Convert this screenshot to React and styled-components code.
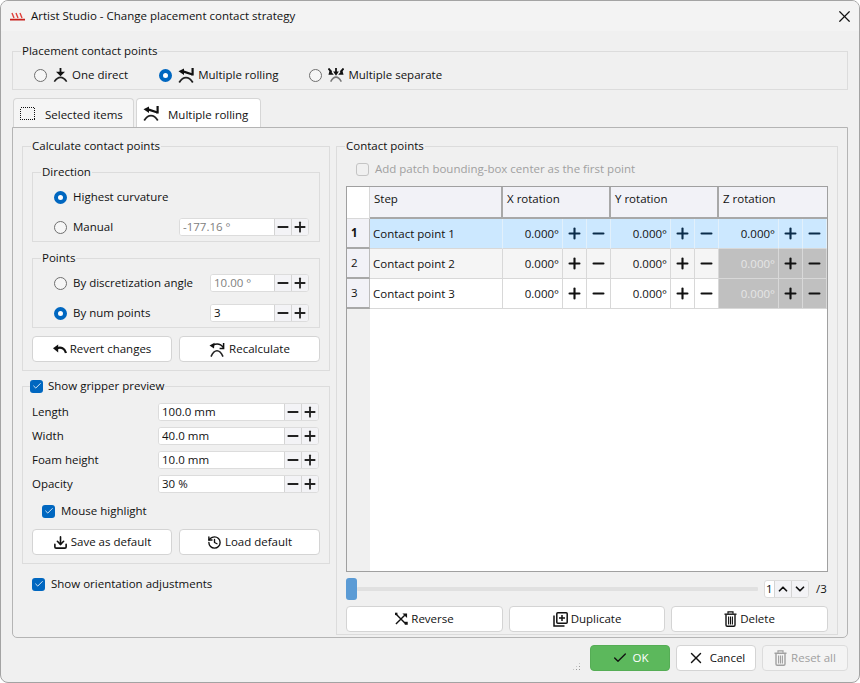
import styled, { createGlobalStyle } from 'styled-components';
import { Check, ChevronDown, ChevronUp, Download, History, Minus, Plus, X } from 'lucide-react';

const FONT = "'Open Sans', 'Noto Sans', sans-serif";

function Logo() {
  return (
    <svg width="15" height="9" viewBox="0 0 15 9">
      <path d="M2 1 L4 6 M6 1 L8 6 M10 1 L12 6" fill="none" stroke="#e0403a" strokeWidth="1.4" />
      <path d="M0 7.6 H15" stroke="#c8201c" strokeWidth="1.6" />
    </svg>
  );
}

function DirectIcon() {
  return (
    <svg width="15" height="14" viewBox="-0.5 0 15 14">
      <path d="M7 0 V5" stroke="#111" strokeWidth="1.8" />
      <path d="M2.5 3.8 H11.5 L7 8.3 Z" fill="#111" />
      <path d="M0.8 13.6 C3 10.4 5 9.4 7 9.4 C9 9.4 11 10.4 13.2 13.6" fill="none" stroke="#222" strokeWidth="1.6" />
    </svg>
  );
}

function RollingIcon() {
  return (
    <svg width="16" height="15" viewBox="0 0 16 15">
      <path d="M14.6 0 V7.5" stroke="#111" strokeWidth="2.2" />
      <path d="M14.5 6.5 L5 3.4" stroke="#111" strokeWidth="2.2" />
      <path d="M0.5 3.2 L6 0.6 V7 Z" fill="#111" />
      <path d="M1.2 14.4 C3.5 10.8 6 9.6 8 9.6 C10 9.6 12.5 10.8 14.8 14.4" fill="none" stroke="#222" strokeWidth="1.8" />
    </svg>
  );
}

function SeparateIcon() {
  return (
    <svg width="16" height="14" viewBox="0 0 18 14" preserveAspectRatio="none">
      <path d="M0.5 0.5 L4 4 M17.5 0.5 L14 4" stroke="#111" strokeWidth="2" />
      <path d="M0.5 6.8 L6.5 6.8 L2 2 Z M17.5 6.8 L11.5 6.8 L16 2 Z" fill="#111" />
      <path d="M9 0 V4" stroke="#111" strokeWidth="2" />
      <path d="M5.8 3.6 H12.2 L9 7.8 Z" fill="#111" />
      <path d="M3 13.6 C5 10.4 7 9.2 9 9.2 C11 9.2 13 10.4 15 13.6" fill="none" stroke="#777" strokeWidth="1.7" />
    </svg>
  );
}

function SelectionIcon() {
  return (
    <svg width="15" height="13" viewBox="0 0 15 13" shapeRendering="crispEdges">
      <rect x="0.5" y="0.5" width="14" height="12" fill="none" stroke="#111" strokeDasharray="1 1" />
    </svg>
  );
}

function RevertIcon() {
  return (
    <svg width="14" height="10" viewBox="0 0 14 10">
      <path d="M0 4.2 L5.2 0.4 V8.4 Z" fill="#111" />
      <path d="M4 4.2 C8 2.8 11.8 4 13 9" fill="none" stroke="#111" strokeWidth="2.2" />
    </svg>
  );
}

function RecalcIcon() {
  return (
    <svg width="17" height="15" viewBox="0 0 17 15">
      <path d="M0.5 3.4 L5.6 0.8 L5 6.6 Z" fill="#111" />
      <path d="M4 3 C8 1.2 12 2.2 14.4 5.6" fill="none" stroke="#111" strokeWidth="1.6" />
      <path d="M14.6 1 V6.4 H10.6" fill="none" stroke="#111" strokeWidth="1.5" />
      <path d="M2 14.6 C4 10.2 6 8.8 8 8.8 C10 8.8 12 10.2 14 14.6" fill="none" stroke="#222" strokeWidth="1.6" />
    </svg>
  );
}

function ReverseIcon() {
  return (
    <svg width="13" height="14" viewBox="0 0 14 14">
      <path d="M1 1.5 L11.5 12 M1 12.5 L10.5 3" fill="none" stroke="#111" strokeWidth="1.5" />
      <path d="M8 1 H13 V6 Z" fill="#111" />
      <rect x="10.5" y="10" width="3.2" height="3.2" fill="#111" />
      <rect x="0" y="0.2" width="2.6" height="2.6" fill="#111" />
    </svg>
  );
}

function DuplicateIcon() {
  return (
    <svg width="15" height="15" viewBox="0 0 15 15">
      <path d="M1 3.5 V14 H11.5" fill="none" stroke="#111" strokeWidth="1.5" />
      <rect x="3.8" y="0.8" width="10.4" height="10.4" rx="1" fill="none" stroke="#111" strokeWidth="1.5" />
      <path d="M9 3 V9 M6 6 H12" stroke="#111" strokeWidth="1.5" />
    </svg>
  );
}

function TrashIcon() {
  return (
    <svg width="13" height="16" viewBox="0 0 13 16" fill="none" stroke="currentColor">
      <path d="M0.5 3.2 H12.5" strokeWidth="1.4" />
      <path d="M4 2.8 V0.8 H9 V2.8" strokeWidth="1.2" />
      <path d="M2 4 V14 Q2 15.2 3.2 15.2 H9.8 Q11 15.2 11 14 V4" strokeWidth="1.4" />
      <path d="M4.6 5.5 V13.5 M6.5 5.5 V13.5 M8.4 5.5 V13.5" strokeWidth="1.1" />
    </svg>
  );
}

const rows = [
  { name: 'Contact point 1', selected: true },
  { name: 'Contact point 2', alt: true, lockZ: true },
  { name: 'Contact point 3', lockZ: true },
];

function Spin({ value, width, muted }) {
  return (
    <SpinBox $width={width}>
      <SpinInput $muted={muted} readOnly value={value} />
      <SpinButton><Minus size={16} strokeWidth={2.7} /></SpinButton>
      <SpinButton><Plus size={16} strokeWidth={2.7} /></SpinButton>
    </SpinBox>
  );
}

function Checkbox() {
  return <CheckMark><Check size={10} strokeWidth={2} color="#fff" /></CheckMark>;
}

function AxisCells({ tone, locked }) {
  return (
    <>
      <ValueCell $tone={tone} $locked={locked}>0.000°</ValueCell>
      <StepCell $tone={tone} $locked={locked}><Plus size={17} strokeWidth={3} /></StepCell>
      <StepCell $tone={tone} $locked={locked}><Minus size={17} strokeWidth={3} /></StepCell>
    </>
  );
}

export default function App() {
  return (
    <>
      <GlobalStyle />
      <Dialog>
        <TitleBar>
          <TitleLeft><Logo /><span>Artist Studio - Change placement contact strategy</span></TitleLeft>
          <X size={19} strokeWidth={1.5} color="#111" />
        </TitleBar>

        <Body>
          <Group>
            <Legend>Placement contact points</Legend>
            <ModeRow>
              <Choice><Radio name="mode" readOnly /><DirectIcon /><span>One direct</span></Choice>
              <Choice><Radio name="mode" defaultChecked readOnly /><RollingIcon /><span>Multiple rolling</span></Choice>
              <Choice><Radio name="mode" readOnly /><SeparateIcon /><span>Multiple separate</span></Choice>
            </ModeRow>
          </Group>

          <TabBar>
            <Tab><SelectionIcon /><TabLabel>Selected items</TabLabel></Tab>
            <Tab $active><RollingIcon /><TabLabel>Multiple rolling</TabLabel></Tab>
          </TabBar>

          <Pane>
            <LeftColumn>
              <Group>
                <Legend>Calculate contact points</Legend>
                <GroupInner>
                  <Group>
                    <Legend>Direction</Legend>
                    <OptionList>
                      <OptionRow><Choice><Radio name="dir" defaultChecked readOnly /><span>Highest curvature</span></Choice></OptionRow>
                      <OptionRow>
                        <Choice><Radio name="dir" readOnly /><span>Manual</span></Choice>
                        <Spin value="-177.16 °" width={130} muted />
                      </OptionRow>
                    </OptionList>
                  </Group>
                  <Group>
                    <Legend>Points</Legend>
                    <OptionList>
                      <OptionRow>
                        <Choice><Radio name="pts" readOnly /><span>By discretization angle</span></Choice>
                        <Spin value="10.00 °" width={99} muted />
                      </OptionRow>
                      <OptionRow>
                        <Choice><Radio name="pts" defaultChecked readOnly /><span>By num points</span></Choice>
                        <Spin value="3" width={99} />
                      </OptionRow>
                    </OptionList>
                  </Group>
                  <ButtonRow>
                    <Button><RevertIcon />Revert changes</Button>
                    <Button><RecalcIcon />Recalculate</Button>
                  </ButtonRow>
                </GroupInner>
              </Group>

              <Group>
                <CheckLegend><Checkbox /><span>Show gripper preview</span></CheckLegend>
                <PreviewInner>
                  <FieldRow><span>Length</span><Spin value="100.0 mm" width={161} /></FieldRow>
                  <FieldRow><span>Width</span><Spin value="40.0 mm" width={161} /></FieldRow>
                  <FieldRow><span>Foam height</span><Spin value="10.0 mm" width={161} /></FieldRow>
                  <FieldRow><span>Opacity</span><Spin value="30 %" width={161} /></FieldRow>
                  <HighlightRow><Checkbox /><span>Mouse highlight</span></HighlightRow>
                  <ButtonRow>
                    <Button><Download size={15} strokeWidth={2.6} />Save as default</Button>
                    <Button><History size={15} strokeWidth={2.2} />Load default</Button>
                  </ButtonRow>
                </PreviewInner>
              </Group>

              <OrientationRow><Checkbox /><span>Show orientation adjustments</span></OrientationRow>
            </LeftColumn>

            <RightGroup>
              <Legend>Contact points</Legend>
              <RightInner>
                <PatchRow><EmptyBox /><span>Add patch bounding-box center as the first point</span></PatchRow>
                <Table>
                  <HeaderRow>
                    <Corner />
                    <HeaderCell>Step</HeaderCell>
                    <HeaderCell>X rotation</HeaderCell>
                    <HeaderCell>Y rotation</HeaderCell>
                    <HeaderCell>Z rotation</HeaderCell>
                  </HeaderRow>
                  {rows.map((row, i) => {
                    const tone = row.selected ? 'selected' : row.alt ? 'alt' : 'plain';
                    return (
                      <DataRow key={row.name}>
                        <RowHead $current={row.selected}>{i + 1}</RowHead>
                        <NameCell $tone={tone}>{row.name}</NameCell>
                        <AxisCells tone={tone} />
                        <AxisCells tone={tone} />
                        <AxisCells tone={tone} locked={row.lockZ} />
                      </DataRow>
                    );
                  })}
                  <Filler><FillerHead /></Filler>
                </Table>
                <SliderRow>
                  <Thumb />
                  <Track />
                  <PageSpin>
                    <PageValue>1</PageValue>
                    <PageButton><ChevronUp size={14} strokeWidth={3} /></PageButton>
                    <PageButton><ChevronDown size={14} strokeWidth={3} /></PageButton>
                  </PageSpin>
                  <PageTotal>/3</PageTotal>
                </SliderRow>
                <ActionRow>
                  <Button><ReverseIcon />Reverse</Button>
                  <Button><DuplicateIcon />Duplicate</Button>
                  <Button><TrashIcon />Delete</Button>
                </ActionRow>
              </RightInner>
            </RightGroup>
          </Pane>

          <Footer>
            <Grip />
            <OkButton><Check size={16} strokeWidth={2} color="#111" />OK</OkButton>
            <FooterButton><X size={18} strokeWidth={1.9} />Cancel</FooterButton>
            <ResetButton><TrashIcon />Reset all</ResetButton>
          </Footer>
        </Body>
      </Dialog>
    </>
  );
}

const GlobalStyle = createGlobalStyle`
  html, body {
    margin: 0;
    padding: 0;
    background: #ffffff;
  }

  * {
    box-sizing: border-box;
  }
`;

const Dialog = styled.div`
  width: 860px;
  height: 683px;
  display: flex;
  flex-direction: column;
  background: #f0f0f0;
  border: 1px solid #a3a3a3;
  border-radius: 8px;
  overflow: hidden;
  font-family: ${FONT};
  font-size: 11.5px;
  line-height: 16px;
  color: #111111;
`;

const TitleBar = styled.div`
  height: 30px;
  flex: none;
  display: flex;
  align-items: center;
  justify-content: space-between;
  padding: 0 5px 0 9px;
  background: #f3f3f3;
`;

const TitleLeft = styled.div`
  display: flex;
  align-items: center;
  gap: 6px;
`;

const Body = styled.div`
  flex: 1;
  min-height: 0;
  display: flex;
  flex-direction: column;
  padding: 12px 11px 0;
`;

const Group = styled.fieldset`
  margin: 0;
  padding: 0;
  min-width: 0;
  border: 1px solid #dcdcdc;
`;

const Legend = styled.legend`
  margin-left: 8px;
  padding: 0 1px;
  line-height: 16px;
`;

const CheckLegend = styled.legend`
  display: flex;
  align-items: center;
  gap: 5px;
  margin-left: 7px;
  padding: 0 1px 0 0;
  line-height: 16px;
`;

const ModeRow = styled.div`
  display: flex;
  gap: 31px;
  padding: 7px 21px 5px;
`;

const Choice = styled.label`
  display: flex;
  align-items: center;
  gap: 4px;
  height: 18px;
`;

const Radio = styled.input.attrs({ type: 'radio' })`
  appearance: none;
  width: 13px;
  height: 13px;
  margin: 0 2px 0 0;
  flex: none;
  border: 1px solid #6f6f6f;
  border-radius: 50%;
  background: #f6f6f6;

  &:checked {
    border: 4px solid #0067c0;
    background: #ffffff;
  }
`;

const CheckMark = styled.span`
  width: 13px;
  height: 13px;
  flex: none;
  display: flex;
  align-items: center;
  justify-content: center;
  border-radius: 3px;
  background: #0067c0;
`;

const EmptyBox = styled.span`
  width: 13px;
  height: 13px;
  flex: none;
  border: 1px solid #c4c4c4;
  border-radius: 3px;
  background: #f0f0f0;
`;

const TabBar = styled.div`
  display: flex;
  gap: 2px;
  margin-top: 8px;
  padding-left: 1px;
  height: 29px;
  flex: none;
`;

const Tab = styled.div`
  display: flex;
  align-items: center;
  gap: ${(p) => (p.$active ? '9px' : '10px')};
  width: ${(p) => (p.$active ? '125px' : '121px')};
  padding-left: 6px;
  background: ${(p) => (p.$active ? '#ffffff' : '#f5f5f5')};
  border: 1px solid #d6d6d6;
  border-bottom: none;
  border-radius: 4px 4px 0 0;
`;

const TabLabel = styled.span`
  margin-top: 4px;
`;

const Pane = styled.div`
  flex: 1;
  min-height: 0;
  display: flex;
  gap: 6px;
  padding: 10px 9px 2px 9px;
  border: 1px solid #b4b4b4;
  border-radius: 0 0 5px 5px;
`;

const LeftColumn = styled.div`
  width: 308px;
  flex: none;
  display: flex;
  flex-direction: column;
  gap: 7px;
`;

const GroupInner = styled.div`
  display: flex;
  flex-direction: column;
  gap: 8px;
  padding: 10px 9px 8px;
`;

const OptionList = styled.div`
  display: flex;
  flex-direction: column;
  gap: 12px;
  padding: 8px 10px 5px 21px;
`;

const OptionRow = styled.div`
  display: flex;
  align-items: center;
  justify-content: space-between;
  height: 18px;
`;

const SpinBox = styled.div`
  display: flex;
  width: ${(p) => p.$width}px;
  height: 18px;
  flex: none;
  border: 1px solid #dcdcdc;
  border-radius: 3px;
  background: #ffffff;
  overflow: hidden;
`;

const SpinInput = styled.input`
  flex: 1;
  min-width: 0;
  height: 16px;
  padding: 0 3px;
  border: none;
  outline: none;
  background: #ffffff;
  font: inherit;
  color: ${(p) => (p.$muted ? '#808080' : '#111111')};
`;

const SpinButton = styled.span`
  width: 17px;
  flex: none;
  display: flex;
  align-items: center;
  justify-content: center;
  background: #f3f3f6;
  border-left: 1px solid #d4d4d4;
  color: #222222;
`;

const ButtonRow = styled.div`
  display: grid;
  grid-template-columns: 140px 141px;
  gap: 7px;
  height: 26px;
`;

const Button = styled.button`
  display: flex;
  align-items: center;
  justify-content: center;
  gap: 3px;
  height: 26px;
  padding: 0;
  background: #ffffff;
  border: 1px solid #d4d4d4;
  border-radius: 4px;
  font: inherit;
  color: #111111;
`;

const PreviewInner = styled.div`
  display: flex;
  flex-direction: column;
  gap: 6px;
  padding: 9px 9px 8px;
`;

const FieldRow = styled.div`
  display: flex;
  align-items: center;
  justify-content: space-between;
  height: 18px;
  padding-right: 1px;
`;

const HighlightRow = styled.div`
  display: flex;
  align-items: center;
  gap: 6px;
  height: 16px;
  padding-left: 10px;
  margin: 4px 0 4px;
`;

const OrientationRow = styled.div`
  display: flex;
  align-items: center;
  gap: 6px;
  height: 16px;
  padding-left: 10px;
  margin-top: 5px;
`;

const RightGroup = styled(Group)`
  flex: 1;
  min-width: 0;
  display: flex;
  flex-direction: column;
`;

const RightInner = styled.div`
  flex: 1;
  min-height: 0;
  display: flex;
  flex-direction: column;
  padding: 7px 9px 2px;
`;

const PatchRow = styled.div`
  display: flex;
  align-items: center;
  gap: 6px;
  height: 16px;
  padding-left: 10px;
  color: #a0a0a0;
`;

const Table = styled.div`
  flex: 1;
  min-height: 0;
  display: flex;
  flex-direction: column;
  margin-top: 9px;
  border: 1px solid #a0a0a0;
  background: #ffffff;
`;

const HeaderRow = styled.div`
  display: grid;
  grid-template-columns: 23px 133px 108px 108px 108px;
  height: 32px;
  flex: none;
`;

const Corner = styled.div`
  background: #ffffff;
  border-right: 1px solid #d8d8d8;
  border-bottom: 1px solid #d8d8d8;
`;

const HeaderCell = styled.div`
  padding: 4px 4px 0;
  background: #f2f2f7;
  border-right: 2px solid #a8a8a8;
  border-bottom: 2px solid #a8a8a8;

  &:last-child {
    border-right: none;
  }
`;

const DataRow = styled.div`
  display: grid;
  grid-template-columns: 23px 133px repeat(3, 60px 24px 24px);
  height: 30px;
  flex: none;
`;

const RowHead = styled.div`
  display: flex;
  align-items: center;
  padding-left: 4px;
  background: #f2f2f7;
  border-right: 1px solid #bdbdbd;
  border-bottom: 2px solid #a8a8a8;
  font-weight: ${(p) => (p.$current ? 700 : 400)};
`;

const toneColor = { selected: '#cce8ff', alt: '#f5f5f5', plain: '#ffffff' };

const BodyCell = styled.div`
  display: flex;
  align-items: center;
  background: ${(p) => (p.$locked ? '#c0c0c0' : toneColor[p.$tone])};
  border-right: 1px solid ${(p) => (p.$tone === 'selected' ? '#e2f0fb' : '#d8d8d8')};
  border-bottom: 1px solid #d8d8d8;
`;

const NameCell = styled(BodyCell)`
  padding-left: 3px;
`;

const ValueCell = styled(BodyCell)`
  justify-content: flex-end;
  padding-right: 3px;
  color: ${(p) => (p.$locked ? '#e6e6e6' : '#111111')};
`;

const StepCell = styled(BodyCell)`
  justify-content: center;
  color: ${(p) => (p.$tone === 'selected' ? '#0b2c4a' : '#111111')};
`;

const Filler = styled.div`
  flex: 1;
  min-height: 0;
  display: flex;
`;

const FillerHead = styled.div`
  width: 23px;
  background: #f0f0f0;
`;

const SliderRow = styled.div`
  display: flex;
  align-items: center;
  height: 22px;
  flex: none;
  margin-top: 6px;
`;

const Thumb = styled.div`
  width: 11px;
  height: 22px;
  flex: none;
  border-radius: 3px;
  background: #5b9bd5;
`;

const Track = styled.div`
  flex: 1;
  height: 4px;
  background: #e0e0e0;
  border-radius: 1px;
`;

const PageSpin = styled.div`
  display: flex;
  height: 18px;
  margin-left: 6px;
  border: 1px solid #dcdcdc;
  border-radius: 3px;
  background: #ffffff;
  overflow: hidden;
`;

const PageValue = styled.div`
  width: 9px;
  padding-left: 1px;
  line-height: 16px;
`;

const PageButton = styled.span`
  width: 17px;
  display: flex;
  align-items: center;
  justify-content: center;
  background: #f3f3f6;
  border-left: 1px solid #d4d4d4;
`;

const PageTotal = styled.div`
  width: 19px;
  padding-left: 7px;
`;

const ActionRow = styled.div`
  display: grid;
  grid-template-columns: 157px 156px 157px;
  gap: 6px;
  margin-top: 6px;
  flex: none;
`;

const Footer = styled.div`
  height: 44px;
  flex: none;
  display: flex;
  align-items: flex-start;
  gap: 6px;
  padding-top: 7px;
  justify-content: flex-end;
`;

const Grip = styled.div`
  width: 9px;
  height: 9px;
  margin: 17px 3px 0 0;
  background-image: radial-gradient(circle, #9a9a9a 1px, transparent 1px);
  background-size: 3px 3px;
  clip-path: polygon(100% 0, 100% 100%, 0 100%);
`;

const FooterButton = styled(Button)`
  width: 80px;
  gap: 5px;
`;

const OkButton = styled(FooterButton)`
  background: #5cb85c;
  border-color: #55ad55;
  color: #ffffff;
`;

const ResetButton = styled(Button)`
  width: 86px;
  gap: 4px;
  color: #a0a0a0;
  border-color: #dcdcdc;
  background: #f4f4f4;
`;
